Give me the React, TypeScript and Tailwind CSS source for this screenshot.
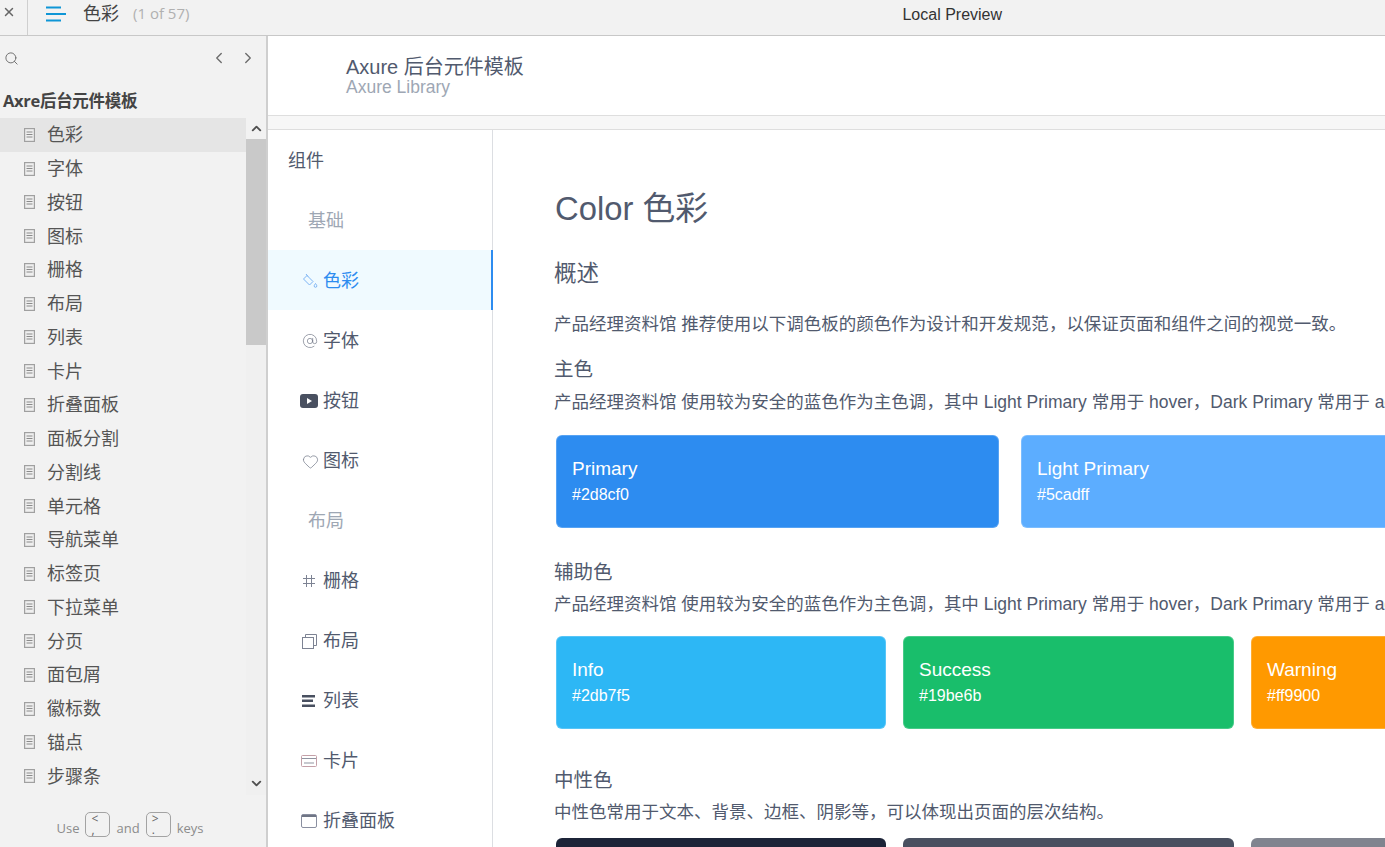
import { ChevronLeft, ChevronRight, ChevronUp, ChevronDown, Search, X, Heart, AtSign } from 'lucide-react';

const pages = ['色彩', '字体', '按钮', '图标', '栅格', '布局', '列表', '卡片', '折叠面板', '面板分割', '分割线', '单元格', '导航菜单', '标签页', '下拉菜单', '分页', '面包屑', '徽标数', '锚点', '步骤条'];

function PageIcon() {
  return (
    <svg width="11" height="14" viewBox="0 0 11 14" className="shrink-0">
      <rect x="0.6" y="0.6" width="9.8" height="12.8" fill="#efefef" stroke="#a0a0a0" strokeWidth="1.2" />
      <path d="M2.5 4h6M2.5 6.5h6M2.5 9h6" stroke="#8a8a8a" strokeWidth="1" fill="none" />
    </svg>
  );
}

function KeyCap({ top, bottom }: { top: string; bottom: string }) {
  return (
    <span className="block w-[25px] h-[25px] border border-[#a3a3a3] rounded-[5px] pl-[5px] text-[12px] leading-[11px] text-[#666]">
      {top}
      <br />
      {bottom}
    </span>
  );
}

function Sidebar() {
  return (
    <div className="w-[268px] shrink-0 bg-[#f2f2f2] border-r-2 border-[#cfcfcf] flex flex-col font-['Open_Sans','Noto_Sans_CJK_SC',sans-serif]">
      <div className="h-[44px] flex items-center pl-[4px] pr-[9px] text-[#6b6b6b]">
        <Search size={15} strokeWidth={1.5} />
        <ChevronLeft size={18} strokeWidth={1.8} className="ml-auto" />
        <ChevronRight size={18} strokeWidth={1.8} className="ml-[11px]" />
      </div>
      <div className="h-[38px] pl-[3px] pt-[9px] text-[16.5px] leading-[24px] font-bold text-[#444] tracking-[-0.3px]">Axre后台元件模板</div>
      <div className="flex h-[677px]">
        <div className="flex-1">
          {pages.map((p, i) => (
            <div key={p} className={`h-[33.75px] flex items-center pl-[24px] gap-[12px] text-[18px] text-[#555] ${i === 0 ? 'bg-[#e5e5e5]' : ''}`}>
              <PageIcon />
              <span>{p}</span>
            </div>
          ))}
        </div>
        <div className="w-[20px] flex flex-col bg-[#f0f0f0] text-[#505050]">
          <div className="h-[21px] bg-[#f2f2f2] flex items-center justify-center">
            <ChevronUp size={15} strokeWidth={3} />
          </div>
          <div className="h-[206px] bg-[#c9c9c9]" />
          <div className="flex-1" />
          <div className="h-[21px] flex items-center justify-center mb-[1px]">
            <ChevronDown size={15} strokeWidth={3} />
          </div>
        </div>
      </div>
      <div className="flex-1 flex items-start justify-center gap-[6px] pt-[17px] pr-[6px] text-[13px] text-[#8c8c8c]">
        <span className="mt-[7px]">Use</span>
        <KeyCap top="<" bottom="," />
        <span className="mt-[7px]">and</span>
        <KeyCap top=">" bottom="." />
        <span className="mt-[7px]">keys</span>
      </div>
    </div>
  );
}

const navItems: { label: string; group?: boolean; active?: boolean; icon?: React.ReactNode }[] = [
  { label: '基础', group: true },
  {
    label: '色彩',
    active: true,
    icon: (
      <svg width="16" height="16" viewBox="0 0 16 16" fill="none" stroke="#7db4f5" strokeWidth="1">
        <path d="M5 2.5 11 8.5 7.5 12 1.5 6z" />
        <path d="M4 1l2 2.5" />
        <path d="M13.5 10.5c1 1.3 1.3 1.9 1.3 2.5a1.3 1.3 0 0 1-2.6 0c0-.6.3-1.2 1.3-2.5z" />
      </svg>
    ),
  },
  { label: '字体', icon: <AtSign size={16} strokeWidth={1} color="#6f7585" /> },
  {
    label: '按钮',
    icon: (
      <svg width="18" height="14" viewBox="0 0 18 14" className="-ml-[2px]">
        <rect width="18" height="14" rx="3" fill="#495060" />
        <path d="M7 4l5 3-5 3z" fill="#fff" />
      </svg>
    ),
  },
  { label: '图标', icon: <Heart size={17} strokeWidth={1} color="#6f7585" /> },
  { label: '布局', group: true },
  {
    label: '栅格',
    icon: (
      <svg width="14" height="14" viewBox="0 0 14 14" fill="none" stroke="#7d8393">
        <path d="M4.5 1v12M9.5 1v12M1 4.5h12M1 9.5h12" />
      </svg>
    ),
  },
  {
    label: '布局',
    icon: (
      <svg width="15" height="15" viewBox="0 0 15 15" fill="none" stroke="#7d8393">
        <rect x="0.5" y="3.5" width="11" height="11" />
        <path d="M3.5 3.5v-3h11v11h-3" />
      </svg>
    ),
  },
  {
    label: '列表',
    icon: (
      <svg width="13" height="12" viewBox="0 0 13 12" fill="#495060">
        <rect width="13" height="2.5" />
        <rect y="4.5" width="11" height="2.5" />
        <rect y="9.5" width="13" height="2.5" />
      </svg>
    ),
  },
  {
    label: '卡片',
    icon: (
      <svg width="16" height="12" viewBox="0 0 16 12" fill="none" className="-ml-[1px]">
        <rect x="0.5" y="0.5" width="15" height="11" rx="1" stroke="#c4a0a8" />
        <path d="M1 3.5h14M3 8h10" stroke="#8f93a0" strokeWidth="1.2" />
      </svg>
    ),
  },
  {
    label: '折叠面板',
    icon: (
      <svg width="16" height="14" viewBox="0 0 16 14" fill="none" className="-ml-[1px]">
        <rect x="0.5" y="0.5" width="15" height="13" rx="1.5" stroke="#8a8fa0" />
        <path d="M1 2h14" stroke="#6f7585" strokeWidth="2" />
      </svg>
    ),
  },
];

function ComponentNav() {
  return (
    <div className="w-[225px] shrink-0 border-r border-[#dcdee2] text-[#515a6e] text-[18px]">
      <div className="h-[60px] flex items-center pl-[20px] pt-[2px]">组件</div>
      {navItems.map((n, i) =>
        n.group ? (
          <div key={i} className="h-[60px] flex items-center pl-[40px] pt-[2px] text-[#9ea7b4]">{n.label}</div>
        ) : (
          <div
            key={i}
            className={`h-[60px] flex items-center pt-[2px] ${n.active ? 'bg-[#f0faff] text-[#2d8cf0] border-r-2 border-[#2d8cf0] -mr-[1px]' : ''}`}
          >
            <span className="w-[55px] pl-[34px] flex justify-start">{n.icon}</span>
            <span>{n.label}</span>
          </div>
        )
      )}
    </div>
  );
}

function Swatch({ name, hex, bg, w }: { name: string; hex: string; bg: string; w: string }) {
  return (
    <div className={`${w} ${bg} h-[93px] shrink-0 rounded-[6px] border border-white/20 pl-[15px] pt-[20px] text-white`}>
      <div className="text-[19px] leading-[26px]">{name}</div>
      <div className="text-[16px] leading-[22px] mt-[2px]">{hex}</div>
    </div>
  );
}

// full-width comma
const COMMA = '\uFF0C';

function Desc({ className }: { className: string }) {
  return (
    <p className={`text-[17.5px] leading-[24px] ${className}`}>
      产品经理资料馆 使用较为安全的蓝色作为主色调{COMMA}其中 Light Primary 常用于 hover{COMMA}Dark Primary 常用于 active。
    </p>
  );
}

function Content() {
  return (
    <div className="flex-1 min-w-0 overflow-hidden pl-[61px] pt-[56px] text-[#515a6e] whitespace-nowrap">
      <h1 className="text-[32.8px] leading-[46px] ml-[1px]">Color 色彩</h1>
      <h2 className="text-[22.5px] leading-[32px] mt-[26px]">概述</h2>
      <p className="text-[17.5px] leading-[24px] mt-[22px]">产品经理资料馆 推荐使用以下调色板的颜色作为设计和开发规范{COMMA}以保证页面和组件之间的视觉一致。</p>
      <h3 className="text-[19.5px] leading-[26px] mt-[20px]">主色</h3>
      <Desc className="mt-[8px]" />
      <div className="flex gap-[22px] mt-[21px] ml-[2px]">
        <Swatch name="Primary" hex="#2d8cf0" bg="bg-[#2d8cf0]" w="w-[443px]" />
        <Swatch name="Light Primary" hex="#5cadff" bg="bg-[#5cadff]" w="w-[443px]" />
      </div>
      <h3 className="text-[19.5px] leading-[26px] mt-[31px]">辅助色</h3>
      <Desc className="mt-[7px]" />
      <div className="flex gap-[17px] mt-[20px] ml-[2px]">
        <Swatch name="Info" hex="#2db7f5" bg="bg-[#2db7f5]" w="w-[330px]" />
        <Swatch name="Success" hex="#19be6b" bg="bg-[#19be6b]" w="w-[331px]" />
        <Swatch name="Warning" hex="#ff9900" bg="bg-[#ff9900]" w="w-[330px]" />
      </div>
      <h3 className="text-[19.5px] leading-[26px] mt-[38px]">中性色</h3>
      <p className="text-[17.5px] leading-[24px] mt-[7px]">中性色常用于文本、背景、边框、阴影等{COMMA}可以体现出页面的层次结构。</p>
      <div className="flex gap-[17px] mt-[14px] ml-[2px]">
        <div className="w-[330px] h-[93px] shrink-0 rounded-[6px] bg-[#1c2438]" />
        <div className="w-[331px] h-[93px] shrink-0 rounded-[6px] bg-[#495060]" />
        <div className="w-[330px] h-[93px] shrink-0 rounded-[6px] bg-[#80848f]" />
      </div>
    </div>
  );
}

export default function App() {
  return (
    <div className="w-[1385px] h-[847px] overflow-hidden flex flex-col bg-white font-['Liberation_Sans','Noto_Sans_CJK_SC',sans-serif]">
      <div className="h-[36px] shrink-0 bg-[#f2f2f2] border-b border-[#c8c8c8] flex items-center pb-[8px] font-['Open_Sans','Noto_Sans_CJK_SC',sans-serif]">
        <div className="w-[28px] h-[35px] -mb-[8px] border-r border-[#cfcfcf] flex items-start pt-[5px] pl-[2px] text-[#666]">
          <X size={14} strokeWidth={2.5} />
        </div>
        <svg width="20" height="16" viewBox="0 0 20 16" className="ml-[18px]">
          <path d="M0 1.5h15M0 8h20M0 14.5h15" stroke="#0f96d6" strokeWidth="2.2" fill="none" />
        </svg>
        <span className="ml-[17px] text-[18px] text-[#444]">色彩</span>
        <span className="ml-[14px] text-[15px] text-[#b0b0b0]">(1 of 57)</span>
        <span className="ml-[713px] mt-[2px] text-[16px] text-[#333] font-['Liberation_Sans',sans-serif]">Local Preview</span>
      </div>
      <div className="flex-1 min-h-0 flex">
        <Sidebar />
        <div className="flex-1 min-w-0 flex flex-col">
          <div className="h-[79px] shrink-0 pl-[78px] pt-[17px] text-[#515a6e]">
            <div className="text-[20px] leading-[28px]">Axure 后台元件模板</div>
            <div className="text-[17.5px] leading-[18px] -mt-[3px] text-[#9ea7b4]">Axure Library</div>
          </div>
          <div className="h-[15px] shrink-0 bg-[#f7f7f7] border-y border-[#dedede]" />
          <div className="flex-1 min-h-0 flex">
            <ComponentNav />
            <Content />
          </div>
        </div>
      </div>
    </div>
  );
}
